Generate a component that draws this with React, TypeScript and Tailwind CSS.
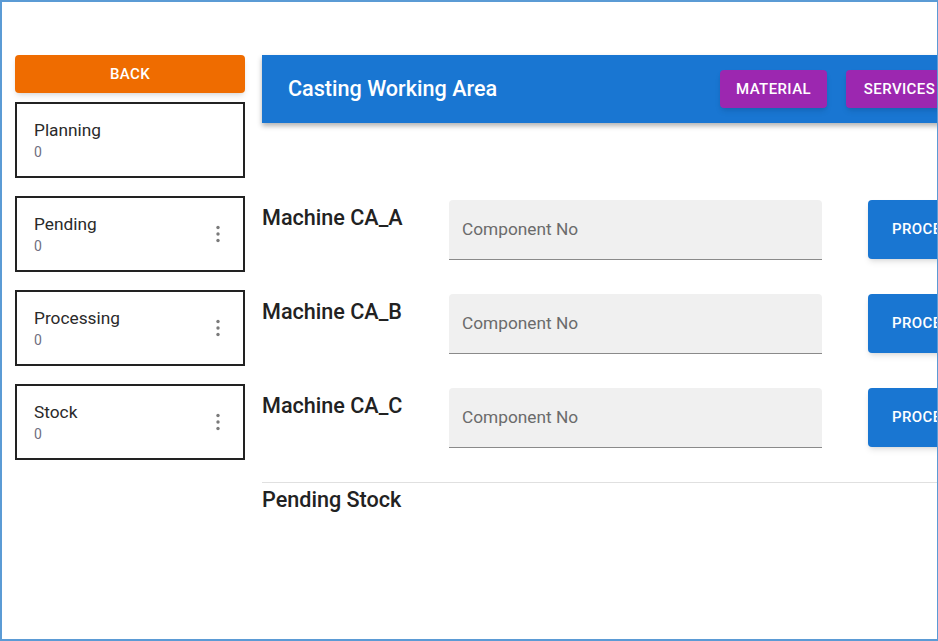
import React from "react";

function Kebab() {
  return (
    <svg width="6" height="18" viewBox="0 0 6 18" className="shrink-0">
      <circle cx="3" cy="2.5" r="1.7" fill="#7a7a7a" />
      <circle cx="3" cy="9" r="1.7" fill="#7a7a7a" />
      <circle cx="3" cy="15.5" r="1.7" fill="#7a7a7a" />
    </svg>
  );
}

function StatusCard({ title, menu }: { title: string; menu?: boolean }) {
  return (
    <div className="flex h-[76px] w-[230px] items-center justify-between border-2 border-[#222222] bg-white pl-[17px] pr-[22px]">
      <div className="flex flex-col">
        <span className="text-[17.3px] leading-6 text-[#2a2a2a]">{title}</span>
        <span className="text-[14px] leading-5 text-[#6f6f80]">0</span>
      </div>
      {menu && <Kebab />}
    </div>
  );
}

function MachineRow({ name }: { name: string }) {
  return (
    <div className="flex items-start">
      <div className="mt-[2px] w-[187px] shrink-0 text-[21.6px] font-medium leading-8 text-[#222222]">
        {name}
      </div>
      <div className="flex h-[60px] w-[373px] shrink-0 items-center rounded-t-[4px] border-b border-[#8a8a8a] bg-[#f0f0f0] px-[13px]">
        <span className="text-[17.3px] text-[#6b6b6b]">Component No</span>
      </div>
      <button className="ml-[46px] h-[59px] w-[130px] shrink-0 rounded-[4px] bg-[#1976d2] pl-[24px] text-left text-[15px] font-medium uppercase tracking-[0.4px] text-white shadow-md">
        PROCESS
      </button>
    </div>
  );
}

export default function App() {
  return (
    <div
      className="h-[641px] w-[938px] overflow-hidden border-b-2 border-l-2 border-r border-t-2 border-[#5b9bd5] bg-white"
      style={{ fontFamily: "Roboto, 'Liberation Sans', sans-serif" }}
    >
      <div className="flex pl-[13px] pt-[53px]">
        <div className="flex w-[230px] shrink-0 flex-col">
          <button className="h-[38px] w-[230px] rounded-[4px] bg-[#ef6c00] text-[15px] font-medium uppercase tracking-[0.4px] text-white shadow-md">
            BACK
          </button>
          <div className="mt-[9px] flex flex-col gap-[18px]">
            <StatusCard title="Planning" />
            <StatusCard title="Pending" menu />
            <StatusCard title="Processing" menu />
            <StatusCard title="Stock" menu />
          </div>
        </div>
        <div className="ml-[17px] flex w-[800px] shrink-0 flex-col">
          <div className="flex h-[68px] items-center bg-[#1976d2] pl-[26px] shadow-[0_3px_5px_rgba(0,0,0,0.3)]">
            <span className="w-[432px] shrink-0 text-[21.6px] font-medium text-white">Casting Working Area</span>
            <div className="flex gap-[19px]">
              <button className="h-[38px] w-[107px] rounded-[4px] bg-[#9c27b0] text-[15px] font-medium uppercase tracking-[0.4px] text-white shadow-md">
                MATERIAL
              </button>
              <button className="h-[38px] w-[107px] rounded-[4px] bg-[#9c27b0] text-[15px] font-medium uppercase tracking-[0.4px] text-white shadow-md">
                SERVICES
              </button>
            </div>
          </div>
          <div className="mt-[77px] flex flex-col gap-[34px]">
            <MachineRow name="Machine CA_A" />
            <MachineRow name="Machine CA_B" />
            <MachineRow name="Machine CA_C" />
          </div>
          <div className="mt-[34px] border-t border-[#e0e0e0] pt-[1px] text-[21.6px] font-medium leading-8 text-[#222222]">
            Pending Stock
          </div>
        </div>
      </div>
    </div>
  );
}
